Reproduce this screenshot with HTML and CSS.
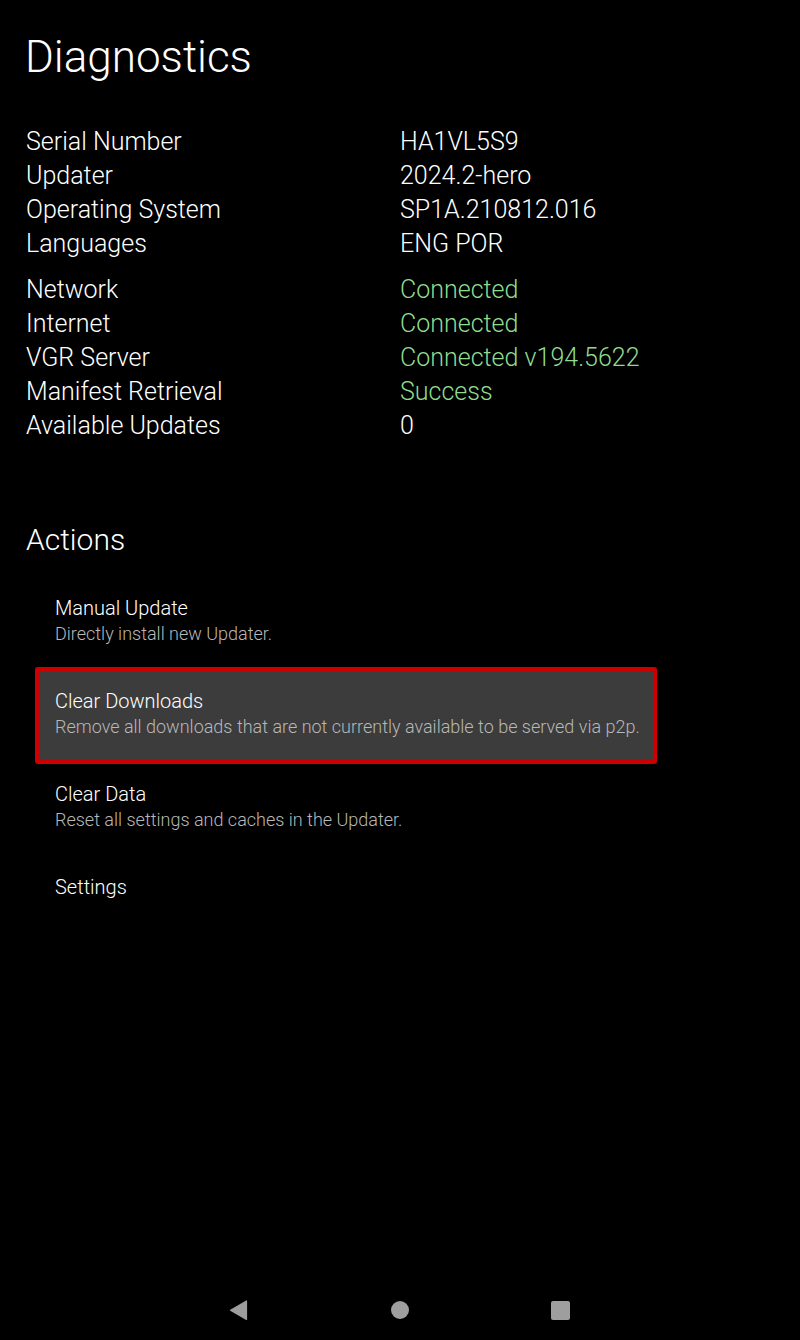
FILE: index.html
```html
<!DOCTYPE html>
<html lang="en">
<head>
<meta charset="utf-8">
<title>Diagnostics</title>
<link rel="stylesheet" href="styles.css">
</head>
<body>
<main class="screen">
  <h1 class="title">Diagnostics</h1>

  <section class="info">
    <div class="group">
      <div class="row"><span class="label">Serial Number</span><span class="value">HA1VL5S9</span></div>
      <div class="row"><span class="label">Updater</span><span class="value">2024.2-hero</span></div>
      <div class="row"><span class="label">Operating System</span><span class="value">SP1A.210812.016</span></div>
      <div class="row"><span class="label">Languages</span><span class="value">ENG POR</span></div>
    </div>
    <div class="group">
      <div class="row"><span class="label">Network</span><span class="value ok">Connected</span></div>
      <div class="row"><span class="label">Internet</span><span class="value ok">Connected</span></div>
      <div class="row"><span class="label">VGR Server</span><span class="value ok">Connected v194.5622</span></div>
      <div class="row"><span class="label">Manifest Retrieval</span><span class="value ok">Success</span></div>
      <div class="row"><span class="label">Available Updates</span><span class="value">0</span></div>
    </div>
  </section>

  <h2 class="section-title">Actions</h2>

  <ul class="actions">
    <li class="action">
      <div class="action-title">Manual Update</div>
      <div class="action-sub">Directly install new Updater.</div>
    </li>
    <li class="action focused">
      <div class="action-title">Clear Downloads</div>
      <div class="action-sub">Remove all downloads that are not currently available to be served via p2p.</div>
    </li>
    <li class="action">
      <div class="action-title">Clear Data</div>
      <div class="action-sub">Reset all settings and caches in the Updater.</div>
    </li>
    <li class="action">
      <div class="action-title">Settings</div>
    </li>
  </ul>
</main>

<nav class="navbar">
  <div class="nav-slot">
    <svg class="nav-icon" viewBox="0 0 24 24" width="24" height="24"><polygon points="19.5,3 19.5,21.5 3.5,12.2" fill="#9e9e9e" stroke="#9e9e9e" stroke-width="1.2" stroke-linejoin="round"/></svg>
  </div>
  <div class="nav-slot">
    <span class="nav-home"></span>
  </div>
  <div class="nav-slot">
    <span class="nav-recent"></span>
  </div>
</nav>
</body>
</html>
```

FILE: styles.css
```css
* {
  box-sizing: border-box;
}

html, body {
  margin: 0;
  padding: 0;
  background: #000;
}

body {
  min-height: 100vh;
  display: flex;
  flex-direction: column;
  font-family: Roboto, "Noto Sans", "Liberation Sans", sans-serif;
  color: #fff;
}

.screen {
  flex: 1;
  padding: 29px 0 0 26px;
}

.title {
  margin: 0 0 0 -1px;
  font-size: 44px;
  line-height: 56px;
  font-weight: 300;
}

.info {
  margin-top: 40px;
  display: flex;
  flex-direction: column;
  gap: 12px;
}

.row {
  display: grid;
  grid-template-columns: 374px 1fr;
  font-size: 25px;
  line-height: 34px;
  font-weight: 300;
}

.value.ok {
  color: #8fdc8f;
}

.section-title {
  margin: 77px 0 0;
  font-size: 30px;
  line-height: 40px;
  font-weight: 300;
}

.actions {
  list-style: none;
  margin: 16px 0 0 11px;
  padding: 0;
  width: 618px;
}

.action {
  height: 93px;
  padding: 19px 0 0 18px;
}

.action.focused {
  background: #3c3c3c;
  outline: 4px solid #cc0000;
  outline-offset: -2px;
  border-radius: 1px;
}

.action-title {
  font-size: 20px;
  line-height: 26px;
  font-weight: 300;
}

.action-sub {
  font-size: 18px;
  line-height: 26px;
  color: #b8b8b8;
  font-weight: 300;
}

.navbar {
  height: 60px;
  display: grid;
  grid-template-columns: repeat(3, 160px);
  justify-content: center;
  align-items: center;
}

.nav-slot {
  display: flex;
  justify-content: center;
  align-items: center;
}

.nav-icon {
  display: block;
  transform: translateX(-1px);
}

.nav-home {
  width: 18px;
  height: 18px;
  border-radius: 50%;
  background: #9e9e9e;
}

.nav-recent {
  width: 19px;
  height: 19px;
  border-radius: 2px;
  background: #9e9e9e;
}
```
